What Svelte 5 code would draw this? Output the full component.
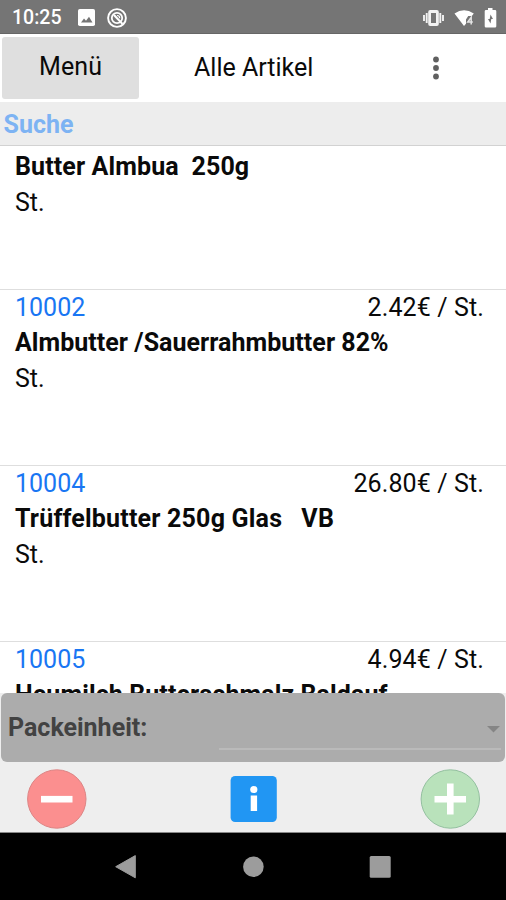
<script>
  const articles = [
    { name: 'Butter Almbua  250g', unit: 'St.', spacing: 0.12 },
    { number: '10002', name: 'Almbutter /Sauerrahmbutter 82%', price: '2.42€ / St.', unit: 'St.', spacing: 0.04 },
    { number: '10004', name: 'Trüffelbutter 250g Glas   VB', price: '26.80€ / St.', unit: 'St.', spacing: 0.19 },
    { number: '10005', name: 'Heumilch Butterschmalz Baldauf', price: '4.94€ / St.', spacing: 0.1 }
  ];
</script>

<div class="screen">
  <div class="status">
    <span class="time">10:25</span>
    <svg class="photo" width="17" height="17" viewBox="0 0 17 17">
      <rect width="17" height="17" rx="1.8" fill="#fff" />
      <path d="M3 13.5 6 9.5l2 2.3 3-4 3.5 5.7z" fill="#757575" />
    </svg>
    <svg class="blocked" width="20" height="20" viewBox="0 0 20 20" fill="none" stroke="#fff">
      <circle cx="10" cy="10" r="8.9" stroke-width="1.9" />
      <circle cx="10" cy="10" r="5.2" stroke-width="1.8" />
      <path d="M7 7l8.5 9" stroke-width="2" />
      <path d="M10 7.5a2.7 2.7 0 0 1 2.7 2.7" stroke-width="1.2" />
    </svg>
    <span class="grow"></span>
    <svg class="vibrate" width="21" height="18" viewBox="0 0 21 18">
      <path d="M1 6v6M3.7 4v10M17.3 4v10M20 6v6" stroke="#f2f2f2" stroke-width="1.9" />
      <rect x="5.2" y="1" width="10.6" height="16" rx="2" fill="#f2f2f2" />
      <rect x="8" y="4" width="5" height="10" fill="#757575" />
    </svg>
    <svg class="wifi" width="21" height="18" viewBox="0 0 21 18">
      <path d="M.5 4.5Q10 -2 19.8 4.5L17.8 7h-3.6L12 10.5v4.3L10 17z" fill="#fff" />
      <path d="M17.2 15.5V8.4L13.8 13h5" fill="none" stroke="#e5e5e5" stroke-width="1.5" />
    </svg>
    <svg class="battery" width="13" height="20" viewBox="0 0 13 20">
      <path d="M4 0h4.5v2H11a1.3 1.3 0 0 1 1.3 1.3v15A1.3 1.3 0 0 1 11 19.6H2A1.3 1.3 0 0 1 .7 18.3v-15A1.3 1.3 0 0 1 2 2h2z" fill="#fff" />
      <path d="M6.5 6.5 9 11H7.3l-.8 4.5L4 11h1.7z" fill="#757575" />
    </svg>
  </div>

  <header>
    <button class="menu">Menü</button>
    <h1>Alle Artikel</h1>
    <svg class="dots" width="8" height="24" viewBox="0 0 8 24" fill="#606060">
      <circle cx="4" cy="3.5" r="2.9" /><circle cx="4" cy="12" r="2.9" /><circle cx="4" cy="20.5" r="2.9" />
    </svg>
  </header>

  <div class="search">Suche</div>

  <main>
    {#each articles as a}
      <article>
        <div class="line">
          {#if a.number}<span class="number">{a.number}</span><span class="price">{a.price}</span>{/if}
        </div>
        <div class="line name" style="letter-spacing: {a.spacing}px">{a.name}</div>
        {#if a.unit}<div class="line">{a.unit}</div>{/if}
      </article>
    {/each}
  </main>

  <footer>
    <div class="pack">
      <span class="label">Packeinheit:</span>
      <div class="select">
        <svg width="13" height="7" viewBox="0 0 13 7"><path d="M0 0h13L6.5 6.5z" fill="#858585" /></svg>
      </div>
    </div>
    <div class="actions">
      <svg width="60" height="60" viewBox="0 0 60 60">
        <circle cx="29.8" cy="30" r="29.2" fill="#fb8f8f" stroke="#dc8585" />
        <path d="M14 30.2h31.5" stroke="#fff" stroke-width="6.6" />
      </svg>
      <svg width="48" height="48" viewBox="0 0 48 48">
        <rect x=".6" y="1" width="46.2" height="46" rx="4.5" fill="#2196f3" />
        <circle cx="23.8" cy="14.5" r="3.6" fill="#fff" />
        <path d="M20.7 20.5h6.4V36h-6.4z" fill="#fff" />
      </svg>
      <svg width="60" height="60" viewBox="0 0 60 60">
        <circle cx="30.3" cy="30" r="29.2" fill="#b9e2bb" stroke="#94c0a0" />
        <path d="M14.5 30.2h31.5M30.3 14.5v31" stroke="#fff" stroke-width="6.6" />
      </svg>
    </div>
  </footer>

  <nav>
    <svg width="21" height="24" viewBox="0 0 21 24"><path d="M.7 11.7 20.3 .6v22.2z" fill="#9c9c9c" stroke="#9c9c9c" stroke-linejoin="round" /></svg>
    <svg width="22" height="22" viewBox="0 0 22 22"><circle cx="11.4" cy="10.7" r="10.3" fill="#9c9c9c" /></svg>
    <svg width="22" height="22" viewBox="0 0 22 22"><rect x=".7" width="21" height="21.7" rx="1.5" fill="#9c9c9c" /></svg>
  </nav>
</div>

<style>
  :global(body) { margin: 0; }
  .screen {
    width: 506px; height: 900px; display: flex; flex-direction: column;
    background: #fff; color: #0a0a0a; overflow: hidden;
    font-family: Roboto, sans-serif; font-size: 25px;
  }
  svg { display: block; flex: none; }
  .status {
    height: 34px; box-sizing: border-box; flex: none; display: flex; align-items: center;
    padding: 2px 9px 0 12px; background: #757575; border-bottom: 1px solid #666; color: #fff;
  }
  .time { width: 66px; font-size: 19.5px; font-weight: 500; line-height: 32px; }
  .photo { margin-right: 12px; }
  .grow { flex: 1; }
  .vibrate { margin-right: -1px; }
  .wifi { margin-left: 11px; }
  .battery { margin: 0 0 0 9px; }
  header { height: 68px; flex: none; display: flex; align-items: center; }
  .menu {
    width: 137px; height: 62px; margin: 0 0 0 2px; padding: 0 0 3px; border: 0; border-radius: 3px;
    background: #dfdfdf; font: inherit; color: #0a0a0a; letter-spacing: .1px;
  }
  h1 { width: 238px; margin: 0 0 0 55px; font-size: 25px; font-weight: 400; line-height: 36px; }
  .search {
    height: 44px; box-sizing: border-box; flex: none; padding-left: 3.5px;
    background: #ededed; border-bottom: 1px solid #d2d2d2;
    color: #7db3f3; font-size: 25px; font-weight: 700; line-height: 45px;
  }
  main { height: 547px; flex: none; overflow: hidden; display: flex; flex-direction: column; }
  article {
    height: 176px; box-sizing: border-box; flex: none; padding: 0 22px 0 15px;
    border-bottom: 1px solid #dedede;
  }
  article:first-child { margin-top: -32px; }
  article:last-child { height: 83px; border: 0; }
  .line { height: 35.3px; line-height: 36px; display: flex; justify-content: space-between; white-space: pre; }
  .name { font-weight: 700; }
  .number { color: #1976f3; }
  .price { letter-spacing: .12px; }
  footer { height: 140px; flex: none; background: #eee; border-bottom: 1px solid #888; box-sizing: border-box; }
  .pack {
    height: 69px; box-sizing: border-box; display: flex; margin: 0 1px; padding: 0 4px 0 7px;
    border-radius: 6px; background: #acacac;
  }
  .label { width: 211px; color: #424242; font-weight: 700; line-height: 69px; }
  .select {
    flex: 1; height: 57px; box-sizing: border-box; display: flex; align-items: center;
    justify-content: flex-end; padding: 17px 1px 0 0; border-bottom: 2px solid #bababa;
  }
  .actions { height: 70px; display: flex; align-items: center; justify-content: space-between; padding: 3px 26px 0 27px; box-sizing: border-box; }
  nav { height: 67px; flex: none; background: #000; display: flex; align-items: center; justify-content: space-between; padding: 0 115px; }
</style>
